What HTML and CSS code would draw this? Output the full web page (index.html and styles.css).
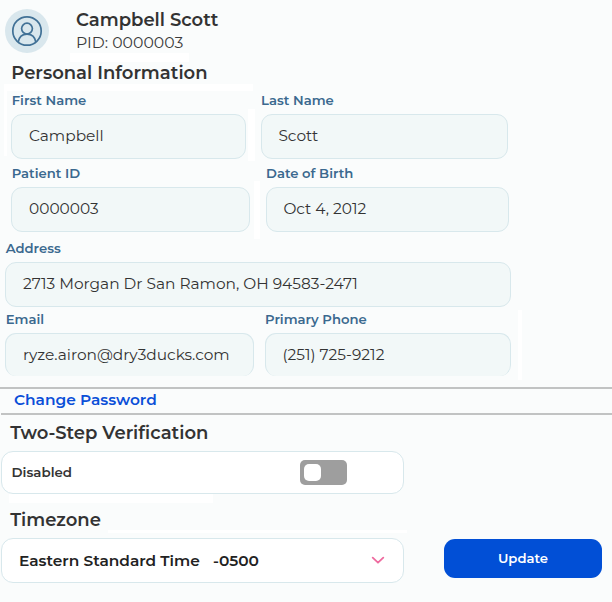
FILE: index.html
```html
<!DOCTYPE html>
<html lang="en">
<head>
<meta charset="utf-8">
<title>Patient Profile</title>
<link rel="stylesheet" href="styles.css">
</head>
<body>
<main class="profile">
  <header class="profile-header">
    <svg class="avatar" viewBox="0 0 44 44" fill="none" stroke="#417196" stroke-width="1.7">
      <circle cx="22" cy="22" r="22" fill="#d9e7ed" stroke="none"/>
      <circle cx="22" cy="22" r="14.2"/>
      <circle cx="22" cy="19.6" r="5.4"/>
      <path d="M13.2 33.1c.8-4.9 4.2-8 8.8-8s8 3.1 8.8 8"/>
    </svg>
    <div class="identity">
      <h1 class="name">Campbell Scott</h1>
      <p class="pid">PID: 0000003</p>
    </div>
  </header>

  <h2 class="heading heading-personal">Personal Information</h2>
  <div class="row row-name">
    <div class="field"><label class="label">First Name</label><div class="value">Campbell</div></div>
    <div class="field"><label class="label">Last Name</label><div class="value">Scott</div></div>
  </div>
  <div class="row row-id">
    <div class="field"><label class="label">Patient ID</label><div class="value">0000003</div></div>
    <div class="field"><label class="label">Date of Birth</label><div class="value">Oct 4, 2012</div></div>
  </div>
  <div class="row row-address">
    <div class="field"><label class="label">Address</label><div class="value">2713 Morgan Dr San Ramon, OH 94583-2471</div></div>
  </div>
  <div class="row row-contact">
    <div class="field"><label class="label">Email</label><div class="value">ryze.airon@dry3ducks.com</div></div>
    <div class="field"><label class="label">Primary Phone</label><div class="value">(251) 725-9212</div></div>
  </div>

  <div class="password"><a class="password-link">Change Password</a></div>
  <div class="rule"></div>

  <h2 class="heading heading-verify">Two-Step Verification</h2>
  <div class="card verify">
    <span class="status">Disabled</span>
    <span class="toggle"><span class="knob"></span></span>
  </div>

  <h2 class="heading heading-zone">Timezone</h2>
  <div class="footer">
    <div class="card select">
      <span class="zone">Eastern Standard Time</span><span class="offset">-0500</span>
      <svg class="chevron" viewBox="0 0 14 9" fill="none" stroke="#ee6b9f" stroke-width="1.8" stroke-linecap="round" stroke-linejoin="round"><path d="M1.7 1.7 7 6.7l5.3-5"/></svg>
    </div>
    <button class="update">Update</button>
  </div>
</main>
</body>
</html>
```
FILE: styles.css
```css
* { box-sizing: border-box; }

body {
  margin: 0;
  background: #fafcfc;
  color: #333;
  font-family: Montserrat, Inter, "Open Sans", sans-serif;
}

h1, h2, p { margin: 0; }

.profile {
  width: 612px;
  height: 602px;
  overflow: hidden;
  background-image: linear-gradient(#fff, #fff), linear-gradient(#fff, #fff), linear-gradient(#fff, #fff), linear-gradient(#fff, #fff), linear-gradient(#fff, #fff), linear-gradient(#fff, #fff), linear-gradient(#fff, #fff), linear-gradient(#fff, #fff);
  background-repeat: no-repeat;
  background-size: 119px 9px, 249px 7px, 3px 72px, 7px 52px, 6px 58px, 4px 70px, 204px 9px, 299px 3px;
  background-position: 70px 53px, 4px 84px, 4px 84px, 248px 109px, 254px 181px, 518px 310px, 9px 494px, 108px 530px;
}

.profile-header {
  display: flex;
  height: 60px;
  padding: 9px 0 0 5px;
  gap: 27px;
}
.avatar { width: 44px; height: 44px; flex: none; }
.identity { display: flex; flex-direction: column; }
.name { font-size: 18px; line-height: 22px; font-weight: 600; }
.pid { font-size: 15.7px; line-height: 24px; color: #3b3b3b; }

.heading { font-size: 18px; line-height: 22px; font-weight: 600; }
.heading-personal { padding: 2px 0 2px 11.3px; }
.heading-verify { margin-top: 7px; padding-left: 10.2px; }
.heading-zone { margin-top: 15px; padding-left: 10.2px; }

.row { display: grid; }
.row-name { margin: 7px 0 0 11px; grid-template-columns: 235px 247px; column-gap: 15px; }
.row-id { margin: 7px 0 0 11px; grid-template-columns: 239px 243px; column-gap: 16px; }
.row-address { margin: 9px 0 0 5px; grid-template-columns: 506px; }
.row-contact { margin: 5px 0 0 5px; grid-template-columns: 249px 246px; column-gap: 11px; }

.field { display: flex; flex-direction: column; gap: 7px; }
.label {
  font-size: 13.2px;
  line-height: 14px;
  font-weight: 600;
  color: #3b698f;
  white-space: nowrap;
}
.field:first-child .label { padding-left: 0.7px; }

.value {
  display: flex;
  align-items: center;
  height: 45px;
  padding: 0 0 2px 17px;
  border: 1px solid #d8e8ec;
  border-radius: 11px;
  background: #f2f8f8;
  font-size: 15.4px;
  white-space: nowrap;
}
.row-name .field + .field .value,
.row-id .field + .field .value,
.row-contact .field + .field .value { padding-left: 16.4px; }
.row-contact .value { height: 43px; padding-bottom: 1px; border-bottom: 0; }

.password {
  height: 26px;
  margin-top: 11px;
  padding-left: 14px;
  border-top: 2px solid #c1c3c3;
}
.password-link { font-size: 15.4px; line-height: 22px; font-weight: 600; color: #0a4fd8; display: block; }
.rule { height: 2px; margin-left: 1px; background: #c1c3c3; }

.card {
  display: flex;
  align-items: center;
  width: 403px;
  margin-left: 1px;
  border: 1px solid #d8e8ec;
  border-radius: 12px;
  background: #fff;
}
.verify { height: 43px; margin-top: 7px; padding: 0 56px 0 9.5px; justify-content: space-between; }
.status { margin-bottom: 2px; font-size: 13.4px; font-weight: 600; }
.toggle { display: flex; align-items: center; width: 47px; height: 25px; padding-left: 4px; border-radius: 5px; background: #9e9e9e; }
.knob { width: 17px; height: 17px; border-radius: 5px; background: #fff; }

.footer { display: flex; align-items: flex-start; margin-top: 7px; gap: 40px; }
.select { height: 45px; padding: 0 18px 0 17px; font-size: 15.4px; font-weight: 600; color: #222; }
.offset { margin-left: 13px; }
.chevron { width: 14px; height: 9px; margin-left: auto; }
.update {
  width: 158px;
  height: 39px;
  margin-top: 1px;
  padding: 0 0 1px;
  border: 0;
  border-radius: 11px;
  background: #014fd6;
  color: #fff;
  font: 600 13.2px Montserrat, Inter, sans-serif;
}
```
